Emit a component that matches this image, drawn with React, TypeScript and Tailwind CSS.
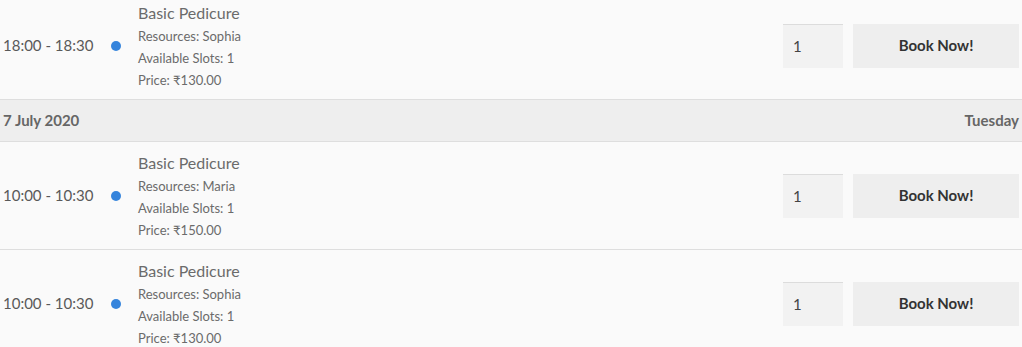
import React from "react";

type Slot = {
  time: string;
  title: string;
  resource: string;
  slots: number;
  price: string;
};

const font = "font-['Source_Sans_Pro','Lato','Liberation_Sans',sans-serif]";

const SlotRow = ({ slot }: { slot: Slot }) => {
  return (
    <div className="flex items-center h-[108px] border-b border-[#dedede]">
      <div className="w-[111px] pl-[3px] text-[15px] text-[#595959]">{slot.time}</div>
      <div className="w-[10px] h-[10px] rounded-full bg-[#3584dc]" />
      <div className="ml-[17px] flex flex-col">
        <div className="text-[16px] leading-[24px] text-[#6b6b6b]">{slot.title}</div>
        <div className="text-[13px] leading-[22px] text-[#6b6b6b]">Resources: {slot.resource}</div>
        <div className="text-[13px] leading-[22px] text-[#6b6b6b]">Available Slots: {slot.slots}</div>
        <div className="text-[13px] leading-[22px] text-[#6b6b6b]">Price: {slot.price}</div>
      </div>
      <div className="ml-auto flex items-center gap-[10px] pr-[3px]">
        <div className="w-[60px] h-[44px] bg-[#f2f2f2] border-t border-[#dcdcdc] flex items-center pl-[10px] text-[15px] text-[#444]">
          1
        </div>
        <button className="w-[166px] h-[44px] bg-[#eeeeee] text-[15px] font-bold text-[#333]">
          Book Now!
        </button>
      </div>
    </div>
  );
};

const DateHeader = ({ date, day }: { date: string; day: string }) => {
  return (
    <div className="flex items-center justify-between h-[42px] px-[3px] bg-[#eeeeee] border-b border-[#dedede] text-[15px] font-bold text-[#666]">
      <span>{date}</span>
      <span>{day}</span>
    </div>
  );
};

const App = () => {
  return (
    <div className={`w-full h-[347px] overflow-hidden bg-[#fafafa] ${font}`}>
      <div className="-mt-[8px]">
        <SlotRow
          slot={{ time: "18:00 - 18:30", title: "Basic Pedicure", resource: "Sophia", slots: 1, price: "₹130.00" }}
        />
        <DateHeader date="7 July 2020" day="Tuesday" />
        <SlotRow
          slot={{ time: "10:00 - 10:30", title: "Basic Pedicure", resource: "Maria", slots: 1, price: "₹150.00" }}
        />
        <SlotRow
          slot={{ time: "10:00 - 10:30", title: "Basic Pedicure", resource: "Sophia", slots: 1, price: "₹130.00" }}
        />
      </div>
    </div>
  );
};

export default App;
